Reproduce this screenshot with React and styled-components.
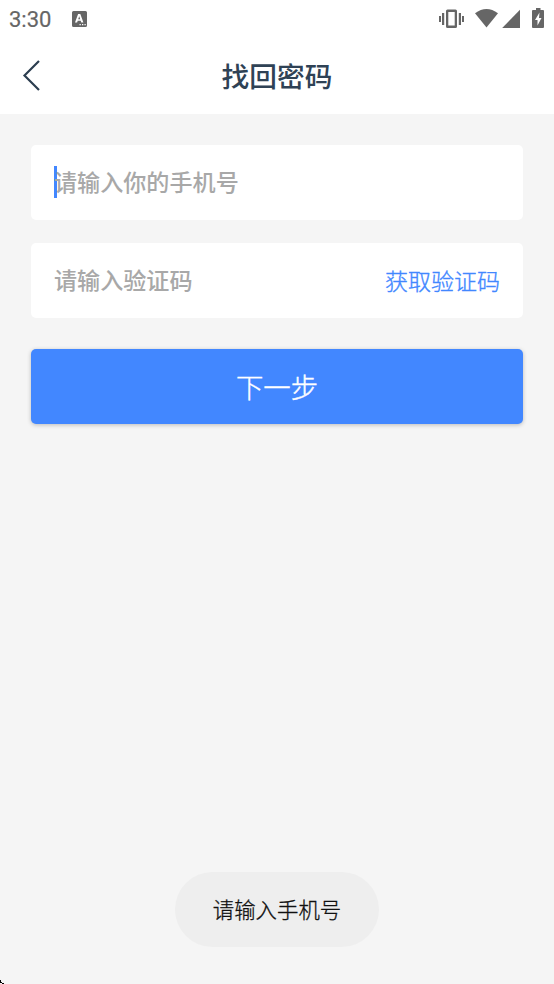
import React from 'react';
import styled, { createGlobalStyle } from 'styled-components';

const GlobalStyle = createGlobalStyle`
  * { box-sizing: border-box; }
  body { margin: 0; background: #f5f5f5; font-family: Roboto, "Noto Sans CJK SC", sans-serif; }
`;

const Screen = styled.div`
  width: 554px;
  height: 984px;
  display: flex;
  flex-direction: column;
  background: #f5f5f5;
  overflow: hidden;
  position: relative;
`;

const StatusBar = styled.div`
  height: 38px;
  flex: none;
  display: flex;
  align-items: center;
  padding: 0 9px;
  background: #fff;
  color: #666;
`;

const Clock = styled.span`
  width: 63px;
  padding-top: 2px;
  font: 400 22px/38px Roboto, sans-serif;
  -webkit-text-stroke: 0.2px currentColor;
`;

const StatusIcons = styled.svg`
  width: 108px;
  height: 22px;
  margin-left: auto;
  fill: currentColor;
`;

const KeyboardIcon = styled.svg`
  width: 15px;
  height: 16px;
  margin-bottom: 1px;
  fill: currentColor;
`;

const NavBar = styled.header`
  height: 76px;
  flex: none;
  display: grid;
  grid-template-columns: 64px 1fr 64px;
  align-items: center;
  background: #fff;
  color: #34495e;
`;

const BackButton = styled.button`
  display: flex;
  padding: 0 0 2px 22px;
  border: 0;
  background: none;
  color: inherit;
`;

const BackIcon = styled.svg`
  width: 20px;
  height: 32px;
  fill: none;
  stroke: #2c3e50;
  stroke-width: 2.2;
`;

const Title = styled.h1`
  margin: 0;
  padding-top: 3px;
  text-align: center;
  font-size: 27.7px;
  line-height: 40px;
  font-weight: 500;
  color: #2f4255;
`;

const Form = styled.main`
  display: flex;
  flex-direction: column;
  padding: 31px 31px 0;
`;

const Field = styled.div`
  height: 75px;
  margin-bottom: ${({ $gap }) => $gap}px;
  padding: 0 23px;
  display: flex;
  align-items: center;
  border-radius: 5px;
  background: #fff;
`;

const Placeholder = styled.span`
  padding-top: 2px;
  font-size: 23.1px;
  line-height: 34px;
  font-weight: 500;
  color: #a8a8a8;
`;

const Caret = styled.i`
  width: 3px;
  height: 32px;
  margin: 0 -3px 1px 0;
  background: #4287ff;
`;

const CodeLink = styled.button`
  margin-left: auto;
  padding: 4px 0 0;
  border: 0;
  background: none;
  font: 300 23px/34px Roboto, "Noto Sans CJK SC", sans-serif;
  color: #4287ff;
  -webkit-text-stroke: 0.35px currentColor;
`;

const NextButton = styled.button`
  height: 75px;
  padding: 4px 0 0;
  border: 0;
  border-radius: 5px;
  background: #4287ff;
  box-shadow: 0 1px 4px rgba(0, 0, 0, 0.24);
  font: 300 27.4px/40px Roboto, "Noto Sans CJK SC", sans-serif;
  color: #fff;
  -webkit-text-stroke: 0.4px currentColor;
`;

const Toast = styled.div`
  align-self: center;
  width: 204px;
  height: 75px;
  margin: auto 0 37px;
  padding-top: 2px;
  border-radius: 38px;
  background: #eee;
  display: flex;
  align-items: center;
  justify-content: center;
  font: 300 21.4px/32px Roboto, "Noto Sans CJK SC", sans-serif;
  color: #111;
  -webkit-text-stroke: 0.3px currentColor;
`;

const PointerTip = styled.svg`
  position: absolute;
  left: 0;
  bottom: 0;
  width: 4px;
  height: 4px;
`;

export default function App() {
  return (
    <Screen>
      <GlobalStyle />
      <StatusBar>
        <Clock>3:30</Clock>
        <KeyboardIcon viewBox="0 0 15 16">
          <path
            fillRule="evenodd"
            d="M1.500 0h12A1.500 1.500 0 0 1 15 1.500v13a1.500 1.500 0 0 1-1.500 1.500h-12A1.500 1.500 0 0 1 0 14.500v-13A1.500 1.500 0 0 1 1.500 0zM6.100 3 3 11.500h2.100l.6-1.800h3l.6 1.800h2.100L8.300 3zM7.200 5.200 8.200 8.200h-2zM7.500 13v1.300h1.300V13zm2.500 0v1.300h1.300V13zm2.500 0v1.300h1.200V13z"
          />
        </KeyboardIcon>
        <StatusIcons viewBox="437 8 108 22">
          <path d="M439 16h2v6h-2zM442 13h2.200v12H442zM458.800 13h2.200v12h-2.200zM462 16h2v6h-2z" />
          <path
            fillRule="evenodd"
            d="M447.500 9.500h8a1.500 1.500 0 0 1 1.500 1.500v15.500a1.500 1.500 0 0 1-1.500 1.500h-8a1.500 1.500 0 0 1-1.500-1.500V11a1.500 1.500 0 0 1 1.500-1.500zm.8 2.500v13.500h6.400V12z"
          />
          <path d="M475 13.200q11.500-8.600 23 0L486.500 27.500z" />
          <path d="M520 9.800v18.200h-17.800z" />
          <path
            fillRule="evenodd"
            d="M536 8h4.500v2h2.500a1 1 0 0 1 1 1v16a1 1 0 0 1-1 1h-10a1 1 0 0 1-1-1V11a1 1 0 0 1 1-1h3zM539.500 12.500 535 20h2.500v5.500l4-7.500h-2.500z"
          />
        </StatusIcons>
      </StatusBar>
      <NavBar>
        <BackButton aria-label="返回">
          <BackIcon viewBox="0 0 20 32">
            <path d="M17 2 2.500 16.500 17 31" />
          </BackIcon>
        </BackButton>
        <Title>找回密码</Title>
      </NavBar>
      <Form>
        <Field $gap={23}>
          <Caret />
          <Placeholder>请输入你的手机号</Placeholder>
        </Field>
        <Field $gap={31}>
          <Placeholder>请输入验证码</Placeholder>
          <CodeLink>获取验证码</CodeLink>
        </Field>
        <NextButton>下一步</NextButton>
      </Form>
      <Toast>请输入手机号</Toast>
      <PointerTip viewBox="0 0 4 4">
        <path d="M0 0h1v2h1v1h2v1H2V3H0z" fill="#000" />
      </PointerTip>
    </Screen>
  );
}
